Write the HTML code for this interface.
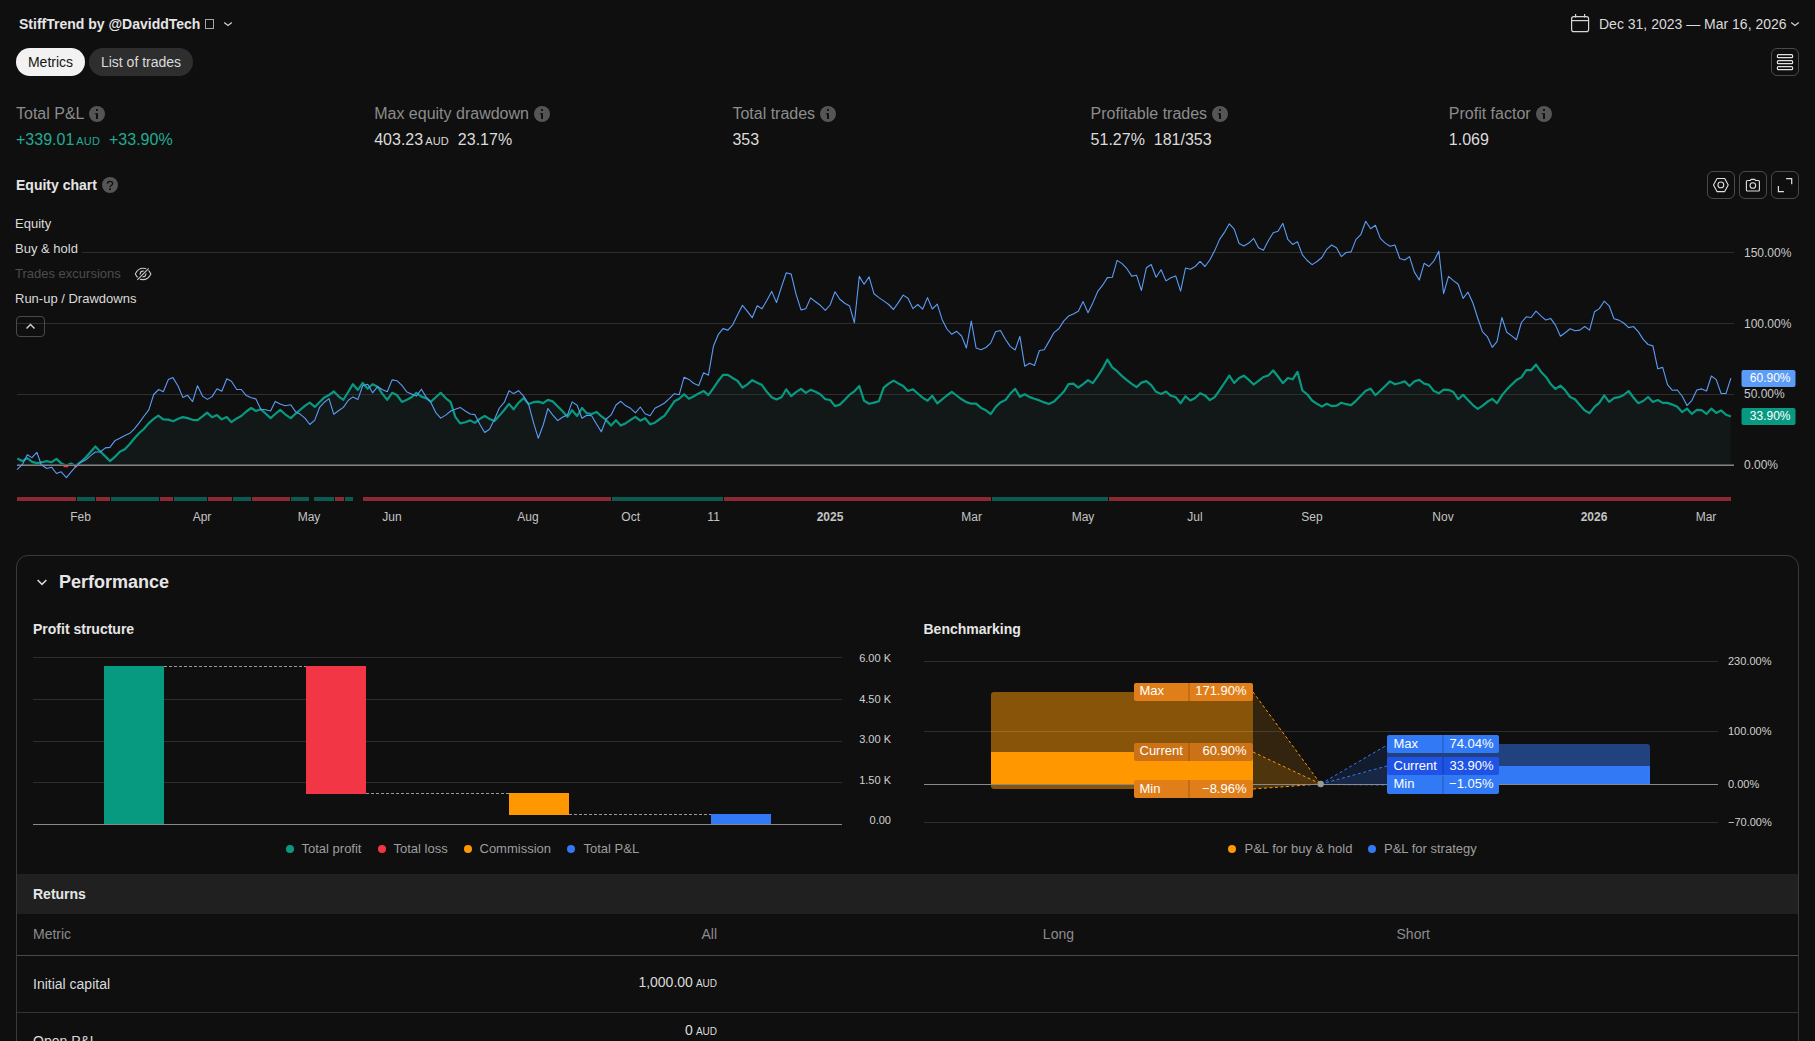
<!DOCTYPE html>
<html><head><meta charset="utf-8"><title>Strategy report</title>
<style>
*{box-sizing:border-box;margin:0;padding:0}
html,body{width:1815px;height:1041px;overflow:hidden;background:#0f0f0f;color:#dbdbdb;font-family:"Liberation Sans",sans-serif;}
body{position:relative}
.abs{position:absolute;white-space:nowrap}
.t{position:absolute;white-space:nowrap;line-height:1}
.pill{position:absolute;top:47px;height:28px;border-radius:14px;font-size:14px;line-height:28px;text-align:center}
.mlabel{position:absolute;top:105px;font-size:16px;line-height:18px;color:#8c8c8c;white-space:nowrap}
.mval{position:absolute;top:131px;font-size:16px;line-height:18px;color:#dbdbdb;white-space:nowrap}
.mval small{font-size:11px;margin-left:2px;letter-spacing:.2px}
.info{display:inline-block;vertical-align:-3px;margin-left:5px}
.ibtn{position:absolute;width:28px;height:28px;border:1px solid #4a4a4a;border-radius:6px}
.leg{position:absolute;left:15px;font-size:13px;line-height:15px;color:#dbdbdb;white-space:nowrap}
.ax{position:absolute;font-size:11px;line-height:12px;color:#d1d1d1;white-space:nowrap}
.lg{position:absolute;top:841px;font-size:13px;line-height:16px;color:#9e9e9e;white-space:nowrap}
.dot{position:absolute;top:845px;width:8px;height:8px;border-radius:50%}
.bl{position:absolute;height:18px;font-size:13px;line-height:18px;color:#fff;white-space:nowrap}
</style></head><body>
<!-- header -->
<div class="t" style="left:19px;top:16px;font-size:14px;font-weight:bold;color:#e6e6e6;line-height:16px">StiffTrend by @DaviddTech</div>
<div class="abs" style="left:205px;top:19px;width:9px;height:10px;border:1px solid #a6a6a6"></div>
<svg class="abs" style="left:221px;top:18px" width="14" height="12" viewBox="0 0 14 12"><path d="M3.2 4.5 L7 7.5 L10.8 4.5" fill="none" stroke="#d0d0d0" stroke-width="1.3"/></svg>

<svg class="abs" style="left:1569px;top:12px" width="22" height="22" viewBox="0 0 22 22" fill="none" stroke="#d6d6d6" stroke-width="1.2"><rect x="2.6" y="4.6" width="17" height="15" rx="2.2"/><line x1="2.6" y1="8.6" x2="19.6" y2="8.6"/><line x1="6.6" y1="2" x2="6.6" y2="5.6"/><line x1="15.6" y1="2" x2="15.6" y2="5.6"/></svg>
<div class="t" style="left:1599px;top:16px;font-size:14px;color:#dbdbdb;line-height:16px">Dec 31, 2023 — Mar 16, 2026</div>
<svg class="abs" style="left:1788px;top:18px" width="14" height="12" viewBox="0 0 14 12"><path d="M3.2 4.5 L7 7.5 L10.8 4.5" fill="none" stroke="#d0d0d0" stroke-width="1.3"/></svg>

<div class="pill" style="top:48px;left:16px;width:69px;background:#f2f2f2;color:#141414">Metrics</div>
<div class="pill" style="top:48px;left:89px;width:104px;background:#2e2e2e;color:#dbdbdb">List of trades</div>

<div class="ibtn" style="left:1771px;top:48px"></div>
<svg class="abs" style="left:1771px;top:48px" width="28" height="28" viewBox="0 0 28 28" fill="none" stroke="#e0e0e0" stroke-width="1.2"><rect x="6.4" y="6.7" width="15.2" height="3" rx="1"/><rect x="6.4" y="12.7" width="15.2" height="3" rx="1"/><rect x="6.4" y="18.7" width="15.2" height="3" rx="1"/></svg>

<!-- metrics -->
<div class="mlabel" style="left:16px">Total P&amp;L<svg class="info" width="16" height="16" viewBox="0 0 16 16"><circle cx="8" cy="8" r="8" fill="#555"/><rect x="7" y="3.1" width="2" height="1.8" fill="#0f0f0f"/><path d="M5.8 7.3H9V12.9H7V8.3H5.8Z" fill="#0f0f0f"/></svg></div>
<div class="mval" style="left:16px;color:#22ab94">+339.01<small>AUD</small>&nbsp; +33.90%</div>
<div class="mlabel" style="left:374.2px">Max equity drawdown<svg class="info" width="16" height="16" viewBox="0 0 16 16"><circle cx="8" cy="8" r="8" fill="#555"/><rect x="7" y="3.1" width="2" height="1.8" fill="#0f0f0f"/><path d="M5.8 7.3H9V12.9H7V8.3H5.8Z" fill="#0f0f0f"/></svg></div>
<div class="mval" style="left:374.2px">403.23<small>AUD</small>&nbsp; 23.17%</div>
<div class="mlabel" style="left:732.4px">Total trades<svg class="info" width="16" height="16" viewBox="0 0 16 16"><circle cx="8" cy="8" r="8" fill="#555"/><rect x="7" y="3.1" width="2" height="1.8" fill="#0f0f0f"/><path d="M5.8 7.3H9V12.9H7V8.3H5.8Z" fill="#0f0f0f"/></svg></div>
<div class="mval" style="left:732.4px">353</div>
<div class="mlabel" style="left:1090.6px">Profitable trades<svg class="info" width="16" height="16" viewBox="0 0 16 16"><circle cx="8" cy="8" r="8" fill="#555"/><rect x="7" y="3.1" width="2" height="1.8" fill="#0f0f0f"/><path d="M5.8 7.3H9V12.9H7V8.3H5.8Z" fill="#0f0f0f"/></svg></div>
<div class="mval" style="left:1090.6px">51.27%&nbsp; 181/353</div>
<div class="mlabel" style="left:1448.8px">Profit factor<svg class="info" width="16" height="16" viewBox="0 0 16 16"><circle cx="8" cy="8" r="8" fill="#555"/><rect x="7" y="3.1" width="2" height="1.8" fill="#0f0f0f"/><path d="M5.8 7.3H9V12.9H7V8.3H5.8Z" fill="#0f0f0f"/></svg></div>
<div class="mval" style="left:1448.8px">1.069</div>

<div class="t" style="left:16px;top:177px;font-size:14px;font-weight:bold;color:#e6e6e6;line-height:16px">Equity chart</div>
<svg class="abs" style="left:102px;top:177px" width="16" height="16" viewBox="0 0 16 16"><circle cx="8" cy="8" r="8" fill="#555"/><path d="M5.4 6.7 A2.65 2.4 0 0 1 10.7 6.7 C10.7 8.3 8 8.3 8 10.2" fill="none" stroke="#0f0f0f" stroke-width="1.3"/><rect x="7.1" y="11.3" width="1.8" height="1.8" fill="#0f0f0f"/></svg>

<div class="ibtn" style="left:1707px;top:171px"></div>
<div class="ibtn" style="left:1739px;top:171px"></div>
<div class="ibtn" style="left:1771px;top:171px"></div>
<svg class="abs" style="left:1707px;top:171px" width="28" height="28" viewBox="0 0 28 28" fill="none" stroke="#e0e0e0" stroke-width="1.1" stroke-linejoin="round"><path d="M6.5 14 L10 7.5 H17.7 L21.2 14 L17.7 20.6 H10Z"/><circle cx="13.85" cy="13.9" r="2.9"/></svg>
<svg class="abs" style="left:1739px;top:171px" width="28" height="28" viewBox="0 0 28 28" fill="none" stroke="#e0e0e0" stroke-width="1.1" stroke-linejoin="round"><path d="M8.4 9.5 H11.1 L12.2 8.4 H15.6 L16.7 9.5 H19.4 Q20.4 9.5 20.4 10.5 V19 Q20.4 20 19.4 20 H8.4 Q7.4 20 7.4 19 V10.5 Q7.4 9.5 8.4 9.5Z"/><circle cx="13.85" cy="14.5" r="2.8"/></svg>
<svg class="abs" style="left:1771px;top:171px" width="28" height="28" viewBox="0 0 28 28" fill="none" stroke="#e0e0e0" stroke-width="1.2"><path d="M15.1 7.6 H20.7 V13.2"/><path d="M7.4 15.1 V20.6 H12.9"/></svg>
<svg id="eq" width="1815" height="340" viewBox="0 200 1815 340" style="position:absolute;left:0;top:200px">
<path d="M17.4,458.6 L22.3,461.1 L27.3,458.1 L32.2,461.9 L37.2,463.1 L42.1,462.2 L46.8,461.1 L51.6,462.2 L56.5,458.9 L61.5,463.6 L66.1,465.5 L71.1,463.6 L75.7,465.9 L81.0,461.7 L85.6,457.6 L90.6,452.0 L95.4,446.5 L100.3,451.5 L105.3,456.4 L109.9,461.1 L114.9,456.9 L119.8,451.8 L124.8,449.3 L129.8,444.0 L134.4,438.3 L139.3,433.0 L144.1,428.7 L148.8,423.1 L153.7,418.9 L158.3,415.6 L163.3,419.3 L168.3,419.6 L173.2,421.2 L178.2,418.8 L182.8,417.1 L187.6,418.1 L192.6,419.8 L197.5,420.1 L202.5,416.4 L207.1,412.6 L212.1,417.3 L217.0,415.1 L221.8,419.3 L226.8,417.1 L231.4,422.2 L236.7,418.4 L241.3,416.0 L246.3,411.5 L251.2,408.0 L255.9,411.0 L260.8,409.3 L265.6,413.5 L270.6,418.1 L275.2,414.0 L280.2,409.8 L285.1,414.3 L290.8,418.1 L295.8,413.5 L300.4,409.7 L305.2,405.7 L309.8,402.7 L314.8,406.9 L319.4,402.2 L324.4,397.4 L329.0,395.0 L333.8,391.5 L338.8,396.6 L343.4,399.8 L348.3,391.7 L353.0,384.2 L357.9,390.0 L362.7,382.9 L367.7,388.7 L372.6,384.2 L377.6,386.7 L382.2,393.6 L387.2,399.8 L392.1,392.8 L396.9,395.0 L401.9,401.9 L406.9,399.8 L411.5,397.3 L416.4,392.8 L421.4,396.6 L426.0,398.1 L431.0,401.6 L435.8,397.3 L440.7,392.8 L445.7,398.1 L450.7,402.2 L455.3,416.8 L460.2,423.4 L465.2,422.2 L470.2,420.4 L474.8,422.9 L479.8,418.9 L484.7,416.0 L489.5,418.9 L494.5,420.9 L499.4,415.6 L504.4,409.8 L509.0,403.9 L513.6,409.3 L518.6,402.7 L523.6,398.1 L528.5,404.0 L533.5,402.2 L538.3,401.6 L543.2,403.1 L547.9,399.9 L552.8,401.4 L557.8,406.5 L562.4,411.0 L567.4,416.8 L572.1,410.2 L577.1,416.0 L582.0,408.0 L586.8,413.2 L591.6,414.1 L596.5,411.9 L601.3,416.2 L606.3,420.2 L611.1,425.6 L616.0,420.2 L620.8,425.6 L625.8,423.2 L630.6,419.9 L635.4,416.9 L640.3,420.7 L645.1,418.2 L650.1,424.3 L654.9,422.7 L659.8,419.0 L664.6,415.7 L669.6,408.3 L674.4,401.3 L679.2,398.7 L684.1,394.2 L688.9,398.7 L693.9,396.2 L698.7,393.4 L703.6,390.9 L708.4,395.1 L713.4,388.1 L718.2,381.0 L723.0,374.9 L727.9,374.9 L732.7,378.0 L737.7,381.0 L742.5,387.6 L747.4,384.3 L752.2,380.2 L757.2,382.7 L762.0,385.1 L766.8,391.8 L771.7,397.2 L776.5,399.5 L781.5,397.2 L786.3,389.3 L791.2,396.2 L796.0,392.2 L801.0,388.9 L805.8,392.9 L810.6,389.8 L815.5,391.8 L820.3,394.2 L825.3,399.2 L830.1,400.0 L835.0,406.1 L839.8,404.6 L844.8,399.7 L849.6,394.7 L854.4,391.3 L859.3,386.0 L864.1,400.8 L869.1,403.8 L874.0,402.6 L878.9,401.2 L883.7,387.7 L888.7,383.6 L893.5,380.6 L898.3,383.4 L903.2,385.9 L908.0,391.0 L913.0,389.3 L917.8,393.5 L922.6,397.6 L927.5,400.7 L932.3,395.8 L937.3,403.4 L942.1,399.3 L946.9,395.5 L951.8,391.8 L956.6,395.5 L961.6,399.3 L966.4,402.1 L971.3,403.7 L976.1,403.7 L981.1,407.9 L985.9,410.3 L990.7,414.1 L995.6,407.0 L1000.4,402.4 L1005.4,400.1 L1010.2,393.8 L1015.1,388.8 L1019.9,396.8 L1024.7,394.3 L1029.7,397.1 L1034.5,398.8 L1039.4,400.4 L1044.2,402.4 L1049.0,404.0 L1054.0,401.6 L1058.8,396.8 L1063.7,391.8 L1068.5,384.2 L1073.3,383.6 L1078.3,387.7 L1083.1,384.2 L1088.0,380.1 L1092.8,383.1 L1097.8,376.1 L1102.6,368.7 L1107.4,359.6 L1112.3,367.4 L1117.1,371.2 L1122.1,376.1 L1126.9,380.1 L1131.8,383.9 L1136.6,387.2 L1141.4,382.6 L1146.4,381.1 L1151.2,385.2 L1156.1,391.8 L1161.1,393.9 L1166.0,391.5 L1170.9,395.8 L1175.7,397.1 L1180.6,403.3 L1185.5,396.2 L1190.3,400.5 L1195.2,398.0 L1200.1,393.3 L1205.0,395.4 L1209.8,400.1 L1214.7,397.1 L1219.6,390.2 L1224.4,383.0 L1229.3,375.7 L1234.2,383.0 L1239.1,378.0 L1243.9,375.7 L1248.8,379.9 L1253.7,384.5 L1258.5,380.8 L1263.4,377.0 L1268.3,375.5 L1273.2,370.5 L1278.0,376.5 L1282.9,383.2 L1287.8,378.0 L1292.6,379.3 L1297.5,371.8 L1302.4,390.5 L1307.2,394.3 L1312.1,400.5 L1317.0,403.8 L1321.9,406.6 L1326.7,403.8 L1331.6,406.1 L1336.5,405.7 L1341.3,402.7 L1346.2,404.2 L1351.1,405.1 L1356.0,400.8 L1360.8,395.8 L1365.7,390.7 L1370.6,388.7 L1375.4,395.2 L1380.3,390.7 L1385.2,386.0 L1390.0,381.4 L1394.9,384.2 L1399.8,383.0 L1404.7,381.4 L1409.5,386.0 L1414.4,381.4 L1419.3,379.9 L1424.1,383.6 L1429.0,384.9 L1433.9,391.1 L1438.8,393.3 L1443.6,389.6 L1448.5,389.8 L1453.4,392.0 L1458.2,399.2 L1463.1,394.8 L1468.0,400.1 L1472.9,405.1 L1477.7,408.9 L1482.4,405.8 L1487.3,401.8 L1492.2,398.9 L1497.0,403.2 L1501.9,395.3 L1506.8,389.6 L1511.7,384.6 L1516.5,380.0 L1521.4,377.4 L1526.3,370.0 L1531.1,370.2 L1536.0,364.5 L1540.9,371.7 L1545.8,376.7 L1550.6,383.9 L1555.5,388.9 L1560.4,385.6 L1565.2,390.3 L1570.1,397.0 L1575.0,399.2 L1579.9,405.1 L1584.7,410.4 L1589.6,413.2 L1594.5,406.8 L1599.3,402.9 L1604.2,395.3 L1609.1,401.8 L1614.0,398.2 L1618.8,397.2 L1623.7,395.0 L1628.6,391.0 L1633.4,397.5 L1638.3,403.2 L1643.2,401.0 L1648.1,397.0 L1652.9,402.0 L1657.8,400.0 L1662.7,402.9 L1667.5,402.9 L1672.4,404.6 L1677.3,406.8 L1682.1,412.1 L1687.0,408.6 L1691.9,413.9 L1696.8,409.9 L1701.6,410.1 L1706.5,413.9 L1711.4,408.6 L1716.2,412.9 L1721.1,410.4 L1726.0,414.7 L1730.9,416.5 L1730.9,465 L17.4,465 Z" fill="#111817"/>
<g stroke="#2e2e2e" stroke-width="1" shape-rendering="crispEdges">
<line x1="81" y1="252.5" x2="1734" y2="252.5"/><line x1="17" y1="323.5" x2="1734" y2="323.5"/><line x1="17" y1="394.5" x2="1734" y2="394.5"/>
</g>
<polyline points="17.4,458.6 22.3,461.1 27.3,458.1 32.2,461.9 37.2,463.1 42.1,462.2 46.8,461.1 51.6,462.2 56.5,458.9 61.5,463.6 66.1,465.5 71.1,463.6 75.7,465.9 81.0,461.7 85.6,457.6 90.6,452.0 95.4,446.5 100.3,451.5 105.3,456.4 109.9,461.1 114.9,456.9 119.8,451.8 124.8,449.3 129.8,444.0 134.4,438.3 139.3,433.0 144.1,428.7 148.8,423.1 153.7,418.9 158.3,415.6 163.3,419.3 168.3,419.6 173.2,421.2 178.2,418.8 182.8,417.1 187.6,418.1 192.6,419.8 197.5,420.1 202.5,416.4 207.1,412.6 212.1,417.3 217.0,415.1 221.8,419.3 226.8,417.1 231.4,422.2 236.7,418.4 241.3,416.0 246.3,411.5 251.2,408.0 255.9,411.0 260.8,409.3 265.6,413.5 270.6,418.1 275.2,414.0 280.2,409.8 285.1,414.3 290.8,418.1 295.8,413.5 300.4,409.7 305.2,405.7 309.8,402.7 314.8,406.9 319.4,402.2 324.4,397.4 329.0,395.0 333.8,391.5 338.8,396.6 343.4,399.8 348.3,391.7 353.0,384.2 357.9,390.0 362.7,382.9 367.7,388.7 372.6,384.2 377.6,386.7 382.2,393.6 387.2,399.8 392.1,392.8 396.9,395.0 401.9,401.9 406.9,399.8 411.5,397.3 416.4,392.8 421.4,396.6 426.0,398.1 431.0,401.6 435.8,397.3 440.7,392.8 445.7,398.1 450.7,402.2 455.3,416.8 460.2,423.4 465.2,422.2 470.2,420.4 474.8,422.9 479.8,418.9 484.7,416.0 489.5,418.9 494.5,420.9 499.4,415.6 504.4,409.8 509.0,403.9 513.6,409.3 518.6,402.7 523.6,398.1 528.5,404.0 533.5,402.2 538.3,401.6 543.2,403.1 547.9,399.9 552.8,401.4 557.8,406.5 562.4,411.0 567.4,416.8 572.1,410.2 577.1,416.0 582.0,408.0 586.8,413.2 591.6,414.1 596.5,411.9 601.3,416.2 606.3,420.2 611.1,425.6 616.0,420.2 620.8,425.6 625.8,423.2 630.6,419.9 635.4,416.9 640.3,420.7 645.1,418.2 650.1,424.3 654.9,422.7 659.8,419.0 664.6,415.7 669.6,408.3 674.4,401.3 679.2,398.7 684.1,394.2 688.9,398.7 693.9,396.2 698.7,393.4 703.6,390.9 708.4,395.1 713.4,388.1 718.2,381.0 723.0,374.9 727.9,374.9 732.7,378.0 737.7,381.0 742.5,387.6 747.4,384.3 752.2,380.2 757.2,382.7 762.0,385.1 766.8,391.8 771.7,397.2 776.5,399.5 781.5,397.2 786.3,389.3 791.2,396.2 796.0,392.2 801.0,388.9 805.8,392.9 810.6,389.8 815.5,391.8 820.3,394.2 825.3,399.2 830.1,400.0 835.0,406.1 839.8,404.6 844.8,399.7 849.6,394.7 854.4,391.3 859.3,386.0 864.1,400.8 869.1,403.8 874.0,402.6 878.9,401.2 883.7,387.7 888.7,383.6 893.5,380.6 898.3,383.4 903.2,385.9 908.0,391.0 913.0,389.3 917.8,393.5 922.6,397.6 927.5,400.7 932.3,395.8 937.3,403.4 942.1,399.3 946.9,395.5 951.8,391.8 956.6,395.5 961.6,399.3 966.4,402.1 971.3,403.7 976.1,403.7 981.1,407.9 985.9,410.3 990.7,414.1 995.6,407.0 1000.4,402.4 1005.4,400.1 1010.2,393.8 1015.1,388.8 1019.9,396.8 1024.7,394.3 1029.7,397.1 1034.5,398.8 1039.4,400.4 1044.2,402.4 1049.0,404.0 1054.0,401.6 1058.8,396.8 1063.7,391.8 1068.5,384.2 1073.3,383.6 1078.3,387.7 1083.1,384.2 1088.0,380.1 1092.8,383.1 1097.8,376.1 1102.6,368.7 1107.4,359.6 1112.3,367.4 1117.1,371.2 1122.1,376.1 1126.9,380.1 1131.8,383.9 1136.6,387.2 1141.4,382.6 1146.4,381.1 1151.2,385.2 1156.1,391.8 1161.1,393.9 1166.0,391.5 1170.9,395.8 1175.7,397.1 1180.6,403.3 1185.5,396.2 1190.3,400.5 1195.2,398.0 1200.1,393.3 1205.0,395.4 1209.8,400.1 1214.7,397.1 1219.6,390.2 1224.4,383.0 1229.3,375.7 1234.2,383.0 1239.1,378.0 1243.9,375.7 1248.8,379.9 1253.7,384.5 1258.5,380.8 1263.4,377.0 1268.3,375.5 1273.2,370.5 1278.0,376.5 1282.9,383.2 1287.8,378.0 1292.6,379.3 1297.5,371.8 1302.4,390.5 1307.2,394.3 1312.1,400.5 1317.0,403.8 1321.9,406.6 1326.7,403.8 1331.6,406.1 1336.5,405.7 1341.3,402.7 1346.2,404.2 1351.1,405.1 1356.0,400.8 1360.8,395.8 1365.7,390.7 1370.6,388.7 1375.4,395.2 1380.3,390.7 1385.2,386.0 1390.0,381.4 1394.9,384.2 1399.8,383.0 1404.7,381.4 1409.5,386.0 1414.4,381.4 1419.3,379.9 1424.1,383.6 1429.0,384.9 1433.9,391.1 1438.8,393.3 1443.6,389.6 1448.5,389.8 1453.4,392.0 1458.2,399.2 1463.1,394.8 1468.0,400.1 1472.9,405.1 1477.7,408.9 1482.4,405.8 1487.3,401.8 1492.2,398.9 1497.0,403.2 1501.9,395.3 1506.8,389.6 1511.7,384.6 1516.5,380.0 1521.4,377.4 1526.3,370.0 1531.1,370.2 1536.0,364.5 1540.9,371.7 1545.8,376.7 1550.6,383.9 1555.5,388.9 1560.4,385.6 1565.2,390.3 1570.1,397.0 1575.0,399.2 1579.9,405.1 1584.7,410.4 1589.6,413.2 1594.5,406.8 1599.3,402.9 1604.2,395.3 1609.1,401.8 1614.0,398.2 1618.8,397.2 1623.7,395.0 1628.6,391.0 1633.4,397.5 1638.3,403.2 1643.2,401.0 1648.1,397.0 1652.9,402.0 1657.8,400.0 1662.7,402.9 1667.5,402.9 1672.4,404.6 1677.3,406.8 1682.1,412.1 1687.0,408.6 1691.9,413.9 1696.8,409.9 1701.6,410.1 1706.5,413.9 1711.4,408.6 1716.2,412.9 1721.1,410.4 1726.0,414.7 1730.9,416.5" fill="none" stroke="#089981" stroke-width="2.2" stroke-linejoin="round"/>
<rect x="17" y="464" width="1717" height="1" fill="#505050" shape-rendering="crispEdges"/><rect x="17" y="465" width="1717" height="1" fill="#828282" shape-rendering="crispEdges"/>
<rect x="63.5" y="466" width="5" height="1.3" rx=".6" fill="#f23645"/><rect x="74" y="466" width="3.5" height="1.3" rx=".6" fill="#f23645"/>
<polyline points="17.0,469.7 22.3,464.7 27.3,454.8 31.9,457.6 36.9,452.3 41.3,464.7 46.8,468.5 51.6,467.2 56.5,473.5 61.2,471.8 66.4,477.6 71.1,471.8 76.0,466.4 81.0,462.2 85.6,460.1 90.6,455.6 95.4,452.0 100.3,452.0 105.3,447.9 109.9,447.4 115.2,440.4 119.8,438.3 124.8,435.5 129.8,433.3 134.4,428.8 139.3,422.6 144.1,416.0 148.8,409.8 153.7,394.5 158.7,389.5 163.3,391.7 168.3,379.6 172.9,377.6 178.2,386.2 182.8,397.4 187.6,395.3 192.6,401.6 197.5,385.7 202.5,396.1 207.4,399.4 212.1,396.6 217.0,388.7 221.8,391.2 226.8,378.8 231.4,381.2 236.7,389.5 241.3,389.5 246.3,395.6 251.2,397.8 255.9,398.9 260.8,409.3 265.6,409.8 270.6,411.0 275.2,401.4 280.2,403.9 285.1,405.7 290.8,404.7 295.8,412.1 300.4,414.3 305.2,418.4 309.8,424.5 314.8,420.1 319.4,407.7 324.4,402.2 329.0,398.6 333.8,414.3 338.8,410.5 343.4,407.4 348.3,400.2 353.0,396.9 357.9,399.4 362.7,385.7 367.7,384.2 372.6,392.8 377.6,386.7 382.2,389.5 387.2,391.7 392.1,379.9 396.9,380.7 401.9,385.4 406.9,392.0 411.5,394.0 416.4,396.1 421.4,389.2 426.0,396.9 431.0,402.7 435.8,412.6 440.7,418.1 445.7,415.1 450.7,411.0 455.3,409.3 460.2,407.4 465.2,411.0 470.2,414.0 474.8,414.6 479.8,424.2 484.7,432.5 489.5,429.2 494.5,419.3 499.4,408.0 504.4,402.2 509.0,390.7 513.6,393.6 518.6,390.7 523.6,396.1 528.5,404.0 533.5,422.6 538.3,438.3 543.2,425.0 547.9,408.5 552.8,415.1 557.8,420.6 562.4,417.3 567.4,415.1 572.1,401.9 577.1,405.2 582.0,418.2 586.8,415.2 591.6,415.7 596.5,424.0 601.3,431.8 606.3,419.0 611.1,414.9 616.0,405.0 620.8,401.3 625.8,405.8 630.6,408.3 635.4,412.9 640.3,407.0 645.1,413.7 650.1,415.7 654.9,408.3 659.8,405.8 664.6,403.0 669.6,398.4 674.4,393.7 679.2,394.7 684.1,377.2 688.9,379.4 693.9,383.5 698.7,385.6 703.6,372.7 708.4,375.2 713.4,346.3 718.2,334.7 723.0,328.6 727.9,330.1 732.7,324.8 737.7,314.6 742.5,305.3 747.4,311.3 752.2,317.7 757.2,305.8 762.0,308.8 766.8,300.5 771.7,291.4 776.5,302.5 781.5,286.8 786.3,272.7 791.2,274.1 796.0,294.2 801.0,309.9 805.8,308.8 810.6,297.9 815.5,301.7 820.3,305.3 825.3,310.4 830.1,305.0 835.0,291.8 839.8,299.2 844.8,303.3 849.6,306.1 854.4,322.8 859.3,276.4 864.1,284.3 869.1,276.9 874.0,293.8 878.9,297.6 883.7,300.9 888.7,304.5 893.5,309.5 898.3,302.6 903.2,295.1 908.0,298.3 913.0,308.7 917.8,304.5 922.6,309.2 927.5,297.6 932.3,309.0 937.3,304.2 942.1,319.4 946.9,329.0 951.8,334.3 956.6,331.3 961.6,336.0 966.4,348.0 971.3,321.1 976.1,348.0 981.1,349.7 985.9,347.5 990.7,343.1 995.6,331.8 1000.4,330.5 1005.4,339.3 1010.2,346.4 1015.1,350.0 1019.9,336.4 1024.7,366.2 1029.7,363.2 1034.5,365.4 1039.4,350.5 1044.2,349.7 1049.0,341.4 1054.0,332.6 1058.8,328.8 1063.7,321.1 1068.5,316.1 1073.3,314.0 1078.3,311.2 1083.1,301.6 1088.0,312.8 1092.8,302.9 1097.8,291.3 1102.6,285.2 1107.4,277.6 1112.3,277.3 1117.1,260.4 1122.1,263.6 1126.9,268.7 1131.8,276.1 1136.6,275.3 1141.4,290.5 1146.4,267.7 1151.2,264.5 1156.1,277.3 1161.1,269.7 1166.0,280.9 1170.9,277.8 1175.7,275.9 1180.6,291.2 1185.5,268.0 1190.3,269.3 1195.2,266.5 1200.1,261.3 1205.0,266.5 1209.8,260.0 1214.7,250.6 1219.6,239.4 1224.4,232.4 1229.3,223.8 1234.2,229.1 1239.1,243.5 1243.9,245.9 1248.8,243.1 1253.7,238.4 1258.5,247.8 1263.4,250.2 1268.3,240.7 1273.2,232.8 1278.0,231.3 1282.9,223.4 1287.8,239.4 1292.6,244.4 1297.5,241.8 1302.4,254.9 1307.2,260.5 1312.1,264.6 1317.0,261.5 1321.9,257.5 1326.7,249.3 1331.6,245.0 1336.5,247.8 1341.3,256.6 1346.2,252.5 1351.1,251.9 1356.0,239.4 1360.8,234.7 1365.7,221.2 1370.6,228.7 1375.4,225.3 1380.3,238.4 1385.2,243.1 1390.0,246.3 1394.9,245.0 1399.8,258.5 1404.7,260.0 1409.5,256.6 1414.4,272.1 1419.3,280.0 1424.1,263.3 1429.0,266.5 1433.9,260.9 1438.8,251.2 1443.6,293.7 1448.5,276.4 1453.4,280.6 1458.2,284.3 1463.1,298.4 1468.0,292.2 1472.9,303.0 1477.7,318.0 1482.4,331.6 1487.3,336.6 1492.2,347.3 1497.0,341.6 1501.9,317.5 1506.8,332.3 1511.7,335.9 1516.5,339.7 1521.4,322.5 1526.3,316.8 1531.1,317.5 1536.0,311.1 1540.9,315.8 1545.8,320.1 1550.6,318.4 1555.5,325.1 1560.4,336.3 1565.2,332.7 1570.1,328.7 1575.0,330.8 1579.9,330.1 1584.7,326.5 1589.6,330.1 1594.5,311.8 1599.3,308.6 1604.2,301.2 1609.1,305.8 1614.0,318.7 1618.8,320.1 1623.7,323.0 1628.6,327.6 1633.4,326.5 1638.3,331.6 1643.2,339.4 1648.1,344.5 1652.9,345.9 1657.8,368.8 1662.7,367.4 1667.5,384.6 1672.4,390.3 1677.3,390.0 1682.1,396.0 1687.0,405.6 1691.9,400.3 1696.8,390.0 1701.6,388.9 1706.5,391.0 1711.4,376.0 1716.2,379.6 1721.1,393.5 1726.0,393.5 1730.9,378.1" fill="none" stroke="#5b9cf6" stroke-width="1.1" stroke-linejoin="round"/>
<g shape-rendering="crispEdges"><rect x="17" y="497" width="59" height="4" fill="#8c2a34"/><rect x="77" y="497" width="18" height="4" fill="#0c5a50"/><rect x="96" y="497" width="14" height="4" fill="#8c2a34"/><rect x="111" y="497" width="48" height="4" fill="#0c5a50"/><rect x="160" y="497" width="13" height="4" fill="#8c2a34"/><rect x="174" y="497" width="33" height="4" fill="#0c5a50"/><rect x="208" y="497" width="24" height="4" fill="#8c2a34"/><rect x="233" y="497" width="18" height="4" fill="#0c5a50"/><rect x="252" y="497" width="38" height="4" fill="#8c2a34"/><rect x="291" y="497" width="18" height="4" fill="#0c5a50"/><rect x="314" y="497" width="20" height="4" fill="#0c5a50"/><rect x="335" y="497" width="9" height="4" fill="#8c2a34"/><rect x="345" y="497" width="8" height="4" fill="#0c5a50"/><rect x="363" y="497" width="248" height="4" fill="#8c2a34"/><rect x="612" y="497" width="111" height="4" fill="#0c5a50"/><rect x="724" y="497" width="267" height="4" fill="#8c2a34"/><rect x="992" y="497" width="116" height="4" fill="#0c5a50"/><rect x="1109" y="497" width="622" height="4" fill="#8c2a34"/></g>
<g font-family="Liberation Sans, sans-serif" font-size="12" fill="#c4c4c4"><text x="80.5" y="521" text-anchor="middle">Feb</text><text x="202" y="521" text-anchor="middle">Apr</text><text x="309" y="521" text-anchor="middle">May</text><text x="392" y="521" text-anchor="middle">Jun</text><text x="528" y="521" text-anchor="middle">Aug</text><text x="630.7" y="521" text-anchor="middle">Oct</text><text x="713.6" y="521" text-anchor="middle">11</text><text x="830" y="521" text-anchor="middle" font-weight="bold">2025</text><text x="971.6" y="521" text-anchor="middle">Mar</text><text x="1083" y="521" text-anchor="middle">May</text><text x="1195" y="521" text-anchor="middle">Jul</text><text x="1312" y="521" text-anchor="middle">Sep</text><text x="1443" y="521" text-anchor="middle">Nov</text><text x="1594" y="521" text-anchor="middle" font-weight="bold">2026</text><text x="1706" y="521" text-anchor="middle">Mar</text></g>
<g font-family="Liberation Sans, sans-serif" font-size="12" fill="#c9c9c9">
<text x="1744" y="257">150.00%</text><text x="1744" y="328">100.00%</text><text x="1744" y="398">50.00%</text><text x="1744" y="469">0.00%</text>
</g>
<rect x="1741.5" y="370" width="54" height="17" rx="2" fill="#5b9cf6"/><text x="1790.5" y="382.3" text-anchor="end" font-family="Liberation Sans, sans-serif" font-size="12" fill="#fff">60.90%</text>
<rect x="1741.5" y="408" width="54" height="17" rx="2" fill="#089981"/><text x="1790.5" y="420.3" text-anchor="end" font-family="Liberation Sans, sans-serif" font-size="12" fill="#fff">33.90%</text>
</svg><!-- chart legend -->
<div class="leg" style="top:216px">Equity</div>
<div class="leg" style="top:241px;background:#0f0f0f;padding-right:4px">Buy &amp; hold</div>
<div class="leg" style="top:266px;color:#4d4d4d">Trades excursions</div>
<div class="leg" style="top:291px">Run-up / Drawdowns</div>
<div class="abs" style="left:16px;top:316px;width:29px;height:21px;border:1px solid #4a4a4a;border-radius:4px"></div>
<svg class="abs" style="left:16px;top:316px" width="29" height="21" viewBox="0 0 29 21"><path d="M10.5 12.5 L14.5 8.5 L18.5 12.5" fill="none" stroke="#d6d6d6" stroke-width="1.4"/></svg>
<svg class="abs" style="left:133px;top:266px" width="20" height="16" viewBox="133 266 20 16" fill="none" stroke="#c8c8c8" stroke-width="1.1"><path d="M135.3 273.9 C137 270.5 140 268.3 143 268.3 C146 268.3 149.2 270.5 150.9 273.9 C149.2 277.4 146 279.6 143 279.6 C140 279.6 137 277.4 135.3 273.9Z"/><circle cx="143" cy="273.9" r="2.8"/><path d="M148.7 268.3 L137.3 279.8" stroke="#0f0f0f" stroke-width="3"/><path d="M148.7 268.3 L137.3 279.8"/></svg>
<!-- performance panel -->
<div class="abs" style="left:16px;top:555px;width:1783px;height:520px;border:1px solid #3a3a3a;border-radius:12px"></div>
<svg class="abs" style="left:34px;top:574px" width="16" height="16" viewBox="0 0 16 16"><path d="M3.6 6 L8 10.4 L12.4 6" fill="none" stroke="#dbdbdb" stroke-width="1.5"/></svg>
<div class="t" style="left:59px;top:572px;font-size:18px;font-weight:bold;color:#e6e6e6;line-height:20px">Performance</div>
<div class="t" style="left:33px;top:621px;font-size:14px;font-weight:bold;color:#e6e6e6;line-height:16px">Profit structure</div>
<div class="t" style="left:923.5px;top:621px;font-size:14px;font-weight:bold;color:#e6e6e6;line-height:16px">Benchmarking</div>

<!-- profit structure -->
<svg class="abs" style="left:0;top:640px" width="905" height="200" viewBox="0 640 905 200">
<g stroke="#2e2e2e" stroke-width="1" shape-rendering="crispEdges"><line x1="33" y1="657.5" x2="842" y2="657.5"/><line x1="33" y1="699.5" x2="842" y2="699.5"/><line x1="33" y1="741.5" x2="842" y2="741.5"/><line x1="33" y1="782.5" x2="842" y2="782.5"/></g>
<line x1="33" y1="824.5" x2="842" y2="824.5" stroke="#8a8a8a" stroke-width="1" shape-rendering="crispEdges"/>
<g shape-rendering="crispEdges">
<rect x="104" y="666" width="60" height="158" fill="#089981"/>
<rect x="306" y="666" width="60" height="128" fill="#f23645"/>
<rect x="509" y="793" width="60" height="22" fill="#ff9800"/>
<rect x="711" y="814" width="60" height="10" fill="#3179f5"/>
<g stroke="#9a9a9a" stroke-width="1" stroke-dasharray="3 2"><line x1="164" y1="666.5" x2="306" y2="666.5"/><line x1="366" y1="793.5" x2="509" y2="793.5"/><line x1="569" y1="814.5" x2="711" y2="814.5"/></g>
</g>
</svg>
<div class="ax" style="right:924px;top:652px">6.00 K</div>
<div class="ax" style="right:924px;top:693px">4.50 K</div>
<div class="ax" style="right:924px;top:733px">3.00 K</div>
<div class="ax" style="right:924px;top:774px">1.50 K</div>
<div class="ax" style="right:924px;top:814px">0.00</div>
<div class="dot" style="left:286px;background:#089981"></div><div class="lg" style="left:301.5px">Total profit</div>
<div class="dot" style="left:378px;background:#f23645"></div><div class="lg" style="left:393.5px">Total loss</div>
<div class="dot" style="left:464px;background:#ff9800"></div><div class="lg" style="left:479.5px">Commission</div>
<div class="dot" style="left:567px;background:#3179f5"></div><div class="lg" style="left:583.5px">Total P&amp;L</div>

<!-- benchmarking -->
<svg class="abs" style="left:905px;top:640px" width="895" height="200" viewBox="905 640 895 200">
<g stroke="#2e2e2e" stroke-width="1" shape-rendering="crispEdges"><line x1="924" y1="661.5" x2="1718" y2="661.5"/><line x1="924" y1="731.5" x2="1718" y2="731.5"/><line x1="924" y1="822.5" x2="1718" y2="822.5"/></g>
<!-- buy & hold -->
<path d="M994 692 H1253 V789 H994 Q991 789 991 786 V695 Q991 692 994 692Z" fill="#88540a"/>
<rect x="991" y="752" width="262" height="32.5" fill="#ff9800"/>
<line x1="991" y1="731.5" x2="1253" y2="731.5" stroke="#9a6a26" stroke-width="1" shape-rendering="crispEdges"/>
<path d="M1253 692 L1320.7 784 L1253 752Z" fill="#32240f"/>
<path d="M1253 752 L1320.7 784 L1253 789Z" fill="#4f350e"/><line x1="1253" y1="731.5" x2="1282" y2="731.5" stroke="#4b3e2b" stroke-width="1" shape-rendering="crispEdges"/>
<g stroke="#ff9800" stroke-width="1" stroke-dasharray="3 2.5" fill="none"><line x1="1253" y1="692" x2="1320.7" y2="784"/><line x1="1253" y1="752" x2="1320.7" y2="784"/><line x1="1253" y1="789" x2="1320.7" y2="784"/></g>
<!-- strategy -->
<path d="M1387 744 H1647 Q1650 744 1650 747 V784.5 H1387Z" fill="#22427f"/>
<rect x="1387" y="766" width="263" height="18.5" fill="#3179f5"/>
<path d="M1320.7 784 L1387 745 L1387 766Z" fill="#131c2c"/>
<path d="M1320.7 784 L1387 766 L1387 785Z" fill="#172745"/>
<g stroke="#3179f5" stroke-width="1" stroke-dasharray="3 2.5" fill="none"><line x1="1320.7" y1="784" x2="1387" y2="745"/><line x1="1320.7" y1="784" x2="1387" y2="766"/><line x1="1320.7" y1="784.5" x2="1387" y2="785"/></g>
<line x1="924" y1="784.5" x2="1718" y2="784.5" stroke="#8a8a8a" stroke-width="1" shape-rendering="crispEdges"/>
<circle cx="1320.7" cy="784" r="3.2" fill="#9a9a9a"/>
<!-- label boxes -->
<g>
<rect x="1134" y="683" width="119" height="18" rx="2" fill="#e07f1a"/><rect x="1188" y="683" width="2" height="18" fill="#c46d15"/>
<rect x="1134" y="743" width="119" height="18" rx="2" fill="#cc7216"/><rect x="1188" y="743" width="2" height="18" fill="#b5630f"/>
<rect x="1134" y="780" width="119" height="18" rx="2" fill="#e07f1a"/><rect x="1188" y="780" width="2" height="18" fill="#c46d15"/>
<rect x="1387" y="735" width="112" height="18" rx="2" fill="#3179f5"/><rect x="1442" y="735" width="2" height="18" fill="#2a68d8"/>
<rect x="1387" y="776" width="112" height="18" rx="2" fill="#3179f5"/><rect x="1442" y="776" width="2" height="18" fill="#2a68d8"/>
<rect x="1387" y="757" width="112" height="18" rx="2" fill="#1e53e5"/><rect x="1442" y="757" width="2" height="18" fill="#1a47c8"/>
</g>
<g font-family="Liberation Sans, sans-serif" font-size="13" fill="#fff">
<text x="1139.5" y="695">Max</text><text x="1246.5" y="695" text-anchor="end">171.90%</text>
<text x="1139.5" y="755">Current</text><text x="1246.5" y="755" text-anchor="end">60.90%</text>
<text x="1139.5" y="792.5">Min</text><text x="1246.5" y="792.5" text-anchor="end">−8.96%</text>
<text x="1393.5" y="747.5">Max</text><text x="1493.5" y="747.5" text-anchor="end">74.04%</text>
<text x="1393.5" y="769.5">Current</text><text x="1493.5" y="769.5" text-anchor="end">33.90%</text>
<text x="1393.5" y="787.5">Min</text><text x="1493.5" y="787.5" text-anchor="end">−1.05%</text>
</g>
</svg>
<div class="ax" style="left:1728px;top:655px">230.00%</div>
<div class="ax" style="left:1728px;top:725px">100.00%</div>
<div class="ax" style="left:1728px;top:778px">0.00%</div>
<div class="ax" style="left:1728px;top:816px">−70.00%</div>
<div class="dot" style="left:1228px;background:#ff9800"></div><div class="lg" style="left:1244.5px">P&amp;L for buy &amp; hold</div>
<div class="dot" style="left:1368px;background:#3179f5"></div><div class="lg" style="left:1384px">P&amp;L for strategy</div>

<!-- returns table -->
<div class="abs" style="left:17px;top:874px;width:1781px;height:40px;background:#202020"></div>
<div class="t" style="left:33px;top:886px;font-size:14px;font-weight:bold;color:#e6e6e6;line-height:16px">Returns</div>
<div class="t" style="left:33px;top:926px;font-size:14px;color:#8c8c8c;line-height:16px">Metric</div>
<div class="t" style="right:1098px;top:926px;font-size:14px;color:#8c8c8c;line-height:16px">All</div>
<div class="t" style="right:741px;top:926px;font-size:14px;color:#8c8c8c;line-height:16px">Long</div>
<div class="t" style="right:385px;top:926px;font-size:14px;color:#8c8c8c;line-height:16px">Short</div>
<div class="abs" style="left:17px;top:955px;width:1781px;height:1px;background:#4a4a4a"></div>
<div class="t" style="left:33px;top:976px;font-size:14px;color:#dbdbdb;line-height:16px">Initial capital</div>
<div class="t" style="right:1098px;top:974px;font-size:14px;color:#dbdbdb;line-height:16px">1,000.00<span style="font-size:10px;margin-left:3px">AUD</span></div>
<div class="abs" style="left:17px;top:1012px;width:1781px;height:1px;background:#333"></div>
<div class="t" style="left:33px;top:1033px;font-size:14px;color:#dbdbdb;line-height:16px">Open P&amp;L</div>
<div class="t" style="right:1098px;top:1022px;font-size:14px;color:#dbdbdb;line-height:16px">0<span style="font-size:10px;margin-left:3px">AUD</span></div>
</body></html>
